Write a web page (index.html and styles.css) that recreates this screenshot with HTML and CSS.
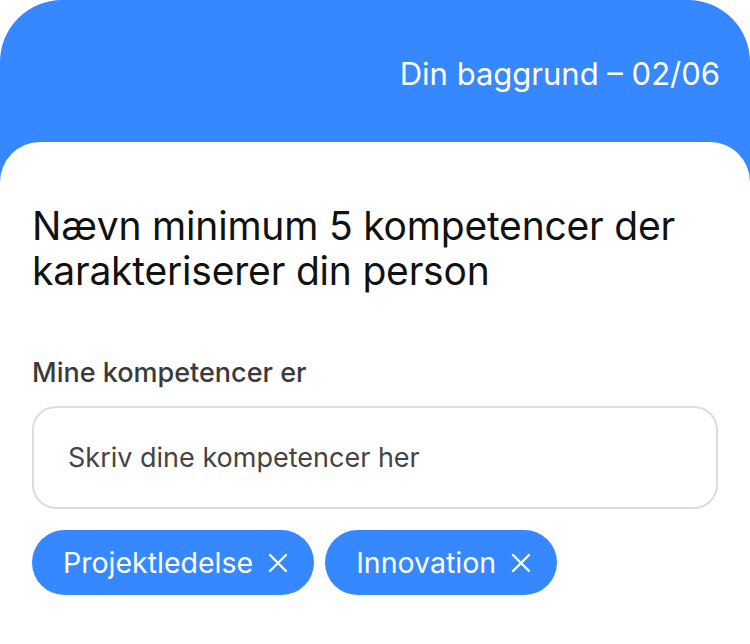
FILE: index.html
```
<!DOCTYPE html>
<html lang="da">
<head>
<meta charset="utf-8">
<link rel="stylesheet" href="styles.css">
</head>
<body>
<div class="screen">
  <header class="top">
    <span class="step">Din baggrund – 02/06</span>
  </header>
  <main class="card">
    <h1 class="title">Nævn minimum 5 kompetencer der karakteriserer din person</h1>
    <label class="label" for="komp">Mine kompetencer er</label>
    <div class="field">
      <input id="komp" class="input" type="text" placeholder="Skriv dine kompetencer her">
    </div>
    <div class="chips">
      <span class="chip">Projektledelse
        <svg class="x" viewBox="0 0 20 20" width="20" height="20"><path d="M2 2L18 18M18 2L2 18" stroke="#fff" stroke-width="2.3" stroke-linecap="round"/></svg>
      </span>
      <span class="chip">Innovation
        <svg class="x" viewBox="0 0 20 20" width="20" height="20"><path d="M2 2L18 18M18 2L2 18" stroke="#fff" stroke-width="2.3" stroke-linecap="round"/></svg>
      </span>
    </div>
  </main>
</div>
</body>
</html>
```

FILE: styles.css
```
* { box-sizing: border-box; }
html, body { margin: 0; padding: 0; background: #fff; }
body { font-family: Inter, "Noto Sans", sans-serif; }

.screen {
  width: 750px;
  height: 644px;
  background: #3588ff;
  border-radius: 62px 62px 0 0;
  display: flex;
  flex-direction: column;
  overflow: hidden;
}

.top {
  height: 142px;
  display: flex;
  justify-content: flex-end;
  padding: 56px 30px 0 0;
}

.step {
  color: #fff;
  font-size: 31px;
  font-weight: 400;
  line-height: 36px;
}

.card {
  flex: 1;
  background: #fff;
  border-radius: 40px 40px 0 0;
  padding: 61px 32px 0 32px;
  display: flex;
  flex-direction: column;
}

.title {
  margin: 0;
  font-size: 39px;
  font-weight: 400;
  line-height: 45px;
  color: #111;
  letter-spacing: -0.2px;
}

.label {
  margin-top: 64px;
  font-size: 27px;
  font-weight: 500;
  color: #3a3a3a;
  line-height: 32px;
}

.field {
  margin-top: 17px;
  width: 686px;
  height: 103px;
  border: 2px solid #dcdcdc;
  border-radius: 24px;
  display: flex;
  align-items: center;
  padding-left: 32px;
}

.input {
  border: 0;
  outline: 0;
  font: inherit;
  font-size: 27px;
  color: #444;
  width: 100%;
  background: transparent;
}
.input::placeholder { color: #444; }

.chips {
  margin-top: 21px;
  display: flex;
  gap: 11px;
}

.chip {
  height: 65px;
  border-radius: 33px;
  background: #3588ff;
  color: #fff;
  font-size: 28.5px;
  display: inline-flex;
  align-items: center;
  gap: 15px;
  padding: 0 26px 0 31px;
}

.x { width: 20px; height: 20px; }
```
